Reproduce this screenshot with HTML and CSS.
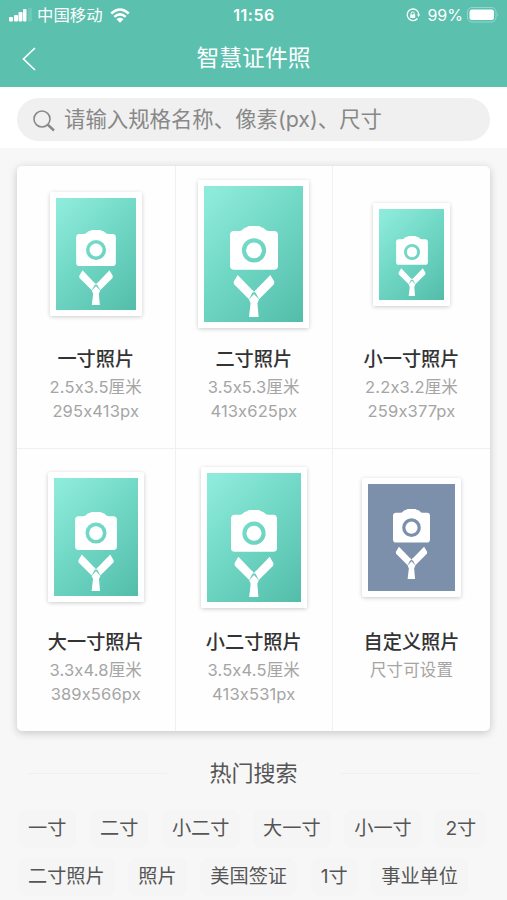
FILE: index.html
```html
<!DOCTYPE html>
<html lang="zh-CN">
<head>
<meta charset="utf-8">
<title>智慧证件照</title>
<link rel="stylesheet" href="styles.css">
</head>
<body>
<svg class="defs" width="0" height="0" aria-hidden="true">
  <symbol id="portrait" viewBox="0 0 119 225">
    <path fill-rule="evenodd" d="M10 12H23Q29 12 33 7Q36 3 42 3Q45 0 48 0H71Q74 0 77 3Q83 3 86 7Q90 12 96 12H109Q119 12 119 22V98Q119 108 109 108H10Q0 108 0 98V22Q0 12 10 12ZM59.500 30A30 30 0 1 0 59.500 90A30 30 0 1 0 59.500 30Z"/>
    <circle cx="59.500" cy="60" r="19.500"/>
    <path d="M19 121L9 138L10 144L47 181L57.500 161ZM100 121L110 138L109 144L72 181L61.500 161ZM59.500 168L72 182L68 191L71 225H47L51 191L47 182Z"/>
    <path d="M54 157L59.500 163L65 157L63 166L59.500 163L56 166Z"/>
  </symbol>
</svg>
<header class="header">
  <div class="status">
    <div class="status-left">
      <svg class="signal" viewBox="0 0 23 14"><rect x="0" y="9" width="4" height="4.500" rx="1"/><rect x="5" y="7" width="4" height="6.500" rx="1"/><rect x="9.500" y="4" width="4" height="9.500" rx="1"/><rect x="14" y="1" width="3.500" height="12.500" rx="1"/><rect x="19" y="0" width="4" height="13.500" rx="1" opacity=".13"/></svg>
      <span class="carrier">中国移动</span>
      <svg class="wifi" viewBox="0 0 20 15"><path d="M1.200 5.500Q10 -2.500 18.800 5.500M4.300 8.900Q10 3.800 15.700 8.900" fill="none" stroke="#fff" stroke-width="2.500"/><path d="M6.500 11.200Q10 8.300 13.500 11.200L10 14.800Z"/></svg>
    </div>
    <span class="clock">11:56</span>
    <div class="status-right">
      <svg class="lock" viewBox="0 0 14 14"><path d="M11.500 3.100A5.800 5.800 0 1 0 11.500 10.500M11.500 3.100Q12.700 4.500 12.700 7" fill="none" stroke="#fff" stroke-width="1.300"/><path d="M11 6.500H14L12.600 9Z"/><path d="M4.200 6.500H9.200V10H4.200Z"/><path d="M5.200 7V5.300Q5.200 3.900 6.700 3.900Q8.200 3.900 8.200 5.300V7" fill="none" stroke="#fff"/></svg>
      <span class="percent">99%</span>
      <svg class="battery" viewBox="0 0 32 16"><rect x=".5" y=".5" width="28.500" height="14.500" rx="4.500" fill="none" stroke="#fff" opacity=".35"/><rect x="2.500" y="2.500" width="24.500" height="10.500" rx="2.500"/><path d="M30.300 5.500Q32 7.800 30.300 10Z" opacity=".4"/></svg>
    </div>
  </div>
  <div class="navbar">
    <svg class="back" viewBox="0 0 14 24"><path d="M13 1L1.500 12L13 23" fill="none" stroke="#fff" stroke-width="1.700"/></svg>
    <h1 class="title">智慧证件照</h1>
  </div>
</header>
<div class="search-area">
  <div class="search">
    <svg class="magnifier" viewBox="0 0 22 22"><circle cx="9" cy="9" r="8" fill="none" stroke="#888" stroke-width="1.600"/><path d="M14.500 14.500L21 20.500" stroke="#888" stroke-width="2.400"/></svg>
    <span>请输入规格名称、像素(px)、尺寸</span>
  </div>
</div>
<main class="card">
  <section class="cell"><div class="stage"><div class="photo one"><svg><use href="#portrait"/></svg></div></div><h2>一寸照片</h2><p>2.5x3.5厘米</p><p>295x413px</p></section>
  <section class="cell"><div class="stage"><div class="photo two"><svg><use href="#portrait"/></svg></div></div><h2>二寸照片</h2><p>3.5x5.3厘米</p><p>413x625px</p></section>
  <section class="cell"><div class="stage"><div class="photo small-one"><svg><use href="#portrait"/></svg></div></div><h2>小一寸照片</h2><p>2.2x3.2厘米</p><p>259x377px</p></section>
  <section class="cell"><div class="stage"><div class="photo big-one"><svg><use href="#portrait"/></svg></div></div><h2>大一寸照片</h2><p>3.3x4.8厘米</p><p>389x566px</p></section>
  <section class="cell"><div class="stage"><div class="photo small-two"><svg><use href="#portrait"/></svg></div></div><h2>小二寸照片</h2><p>3.5x4.5厘米</p><p>413x531px</p></section>
  <section class="cell"><div class="stage"><div class="photo custom"><svg><use href="#portrait"/></svg></div></div><h2>自定义照片</h2><p>尺寸可设置</p></section>
</main>
<div class="hot-title"><span>热门搜索</span></div>
<div class="tags">
  <span>一寸</span><span>二寸</span><span>小二寸</span><span>大一寸</span><span>小一寸</span><span>2寸</span>
</div>
<div class="tags">
  <span>二寸照片</span><span>照片</span><span>美国签证</span><span>1寸</span><span>事业单位</span>
</div>
</body>
</html>
```
FILE: styles.css
```css
* { box-sizing: border-box; }
html { overflow: hidden; }
body {
  margin: 0;
  height: 900px;
  overflow: hidden;
  background: #f7f7f7;
  font-family: Inter, "Noto Sans CJK SC", sans-serif;
  font-feature-settings: "calt" 0;
}
svg { display: block; fill: #fff; flex: none; }
.defs { position: absolute; }
h1, h2, p { margin: 0; }

.header { height: 87px; background: #5bc0ae; color: #fff; }
.status {
  height: 30px;
  display: grid;
  grid-template-columns: 1fr auto 1fr;
  align-items: center;
  padding: 0 8px 0 9px;
}
.status-left, .status-right { display: flex; align-items: center; }
.status-right { justify-content: flex-end; }
.signal { width: 23px; height: 14px; }
.carrier { margin-left: 5px; font-size: 16.4px; line-height: 30px; }
.wifi { width: 20px; height: 15px; margin-left: 7px; }
.clock { font-size: 16px; font-weight: 600; letter-spacing: .5px; }
.lock { width: 14px; height: 14px; }
.percent { margin: 0 4px 0 7px; font-size: 16px; }
.battery { width: 32px; height: 16px; }

.navbar {
  height: 57px;
  display: grid;
  grid-template-columns: 36px 1fr 36px;
  align-items: center;
}
.back { width: 14px; height: 24px; margin-left: 22px; }
.title { text-align: center; font-size: 22.8px; line-height: 55px; font-weight: 400; padding-bottom: 2px; }

.search-area { height: 61px; background: #fff; padding: 11px 17px 7px; }
.search {
  height: 43px;
  border-radius: 22px;
  background: #f0f0f0;
  display: flex;
  align-items: center;
  padding-left: 16px;
  color: #888;
  font-size: 21.4px;
  line-height: 40px;
}
.search span { padding-bottom: 2px; white-space: nowrap; }
.magnifier { width: 22px; height: 22px; margin: 2px 9px 0 0; }

.card {
  margin: 18px 17px 0;
  height: 565px;
  display: grid;
  grid-template-columns: 158.5px 157.5px 157px;
  grid-template-rows: 283px 282px;
  background: #fefefe;
  border-radius: 5px;
  box-shadow: 0 2px 8px rgba(0, 0, 0, .2);
}
.cell { border-right: 1px solid #eef1f1; text-align: center; }
.cell:nth-child(3n) { border-right: 0; }
.cell:nth-child(-n+3) { border-bottom: 1px solid #edf1f1; }
.stage { height: 176px; display: flex; align-items: center; justify-content: center; }
.photo {
  border: 6px solid #fff;
  border-radius: 2px;
  box-shadow: 0 1px 4px rgba(0, 0, 0, .2);
  background: linear-gradient(135deg, #8eebdb 5%, #70d7c5 48%, #54bdaa 100%) padding-box;
  display: flex;
  align-items: flex-end;
  justify-content: center;
}
.one { width: 92px; height: 124px; padding-bottom: 5px; }
.one svg { width: 40px; height: 75px; }
.two { width: 111px; height: 148px; padding-bottom: 5px; }
.two svg { width: 48px; height: 91px; }
.small-one { width: 77px; height: 103px; padding-bottom: 4px; }
.small-one svg { width: 32px; height: 60px; }
.big-one { width: 96px; height: 130px; padding-bottom: 5px; }
.big-one svg { width: 42px; height: 79px; }
.small-two { width: 106px; height: 141px; padding-bottom: 5px; }
.small-two svg { width: 46px; height: 87px; }
.custom { width: 99px; height: 119px; padding-bottom: 12px; background: #7d90ab; }
.custom svg { width: 37px; height: 70px; }
.cell h2 { font-size: 19.2px; line-height: 34px; font-weight: 500; color: #333; }
.cell p { font-size: 16.5px; line-height: 24px; letter-spacing: .15px; color: #a5a5a5; position: relative; top: -1px; }

.hot-title {
  height: 84px;
  margin: 0 28px -5px;
  display: flex;
  align-items: center;
  color: #555;
  font-size: 22px;
}
.hot-title::before, .hot-title::after { content: ""; flex: 1; height: 1px; background: #f0f0f0; }
.hot-title span { margin: 0 43px; line-height: 40px; }

.tags { display: flex; gap: 13.6px; margin: 0 0 10px 18px; }
.tags span {
  height: 38px;
  line-height: 36px;
  padding: 0 10px;
  border-radius: 8px;
  background: #f5f5f5;
  color: #555;
  font-size: 19.2px;
  white-space: nowrap;
}
```
